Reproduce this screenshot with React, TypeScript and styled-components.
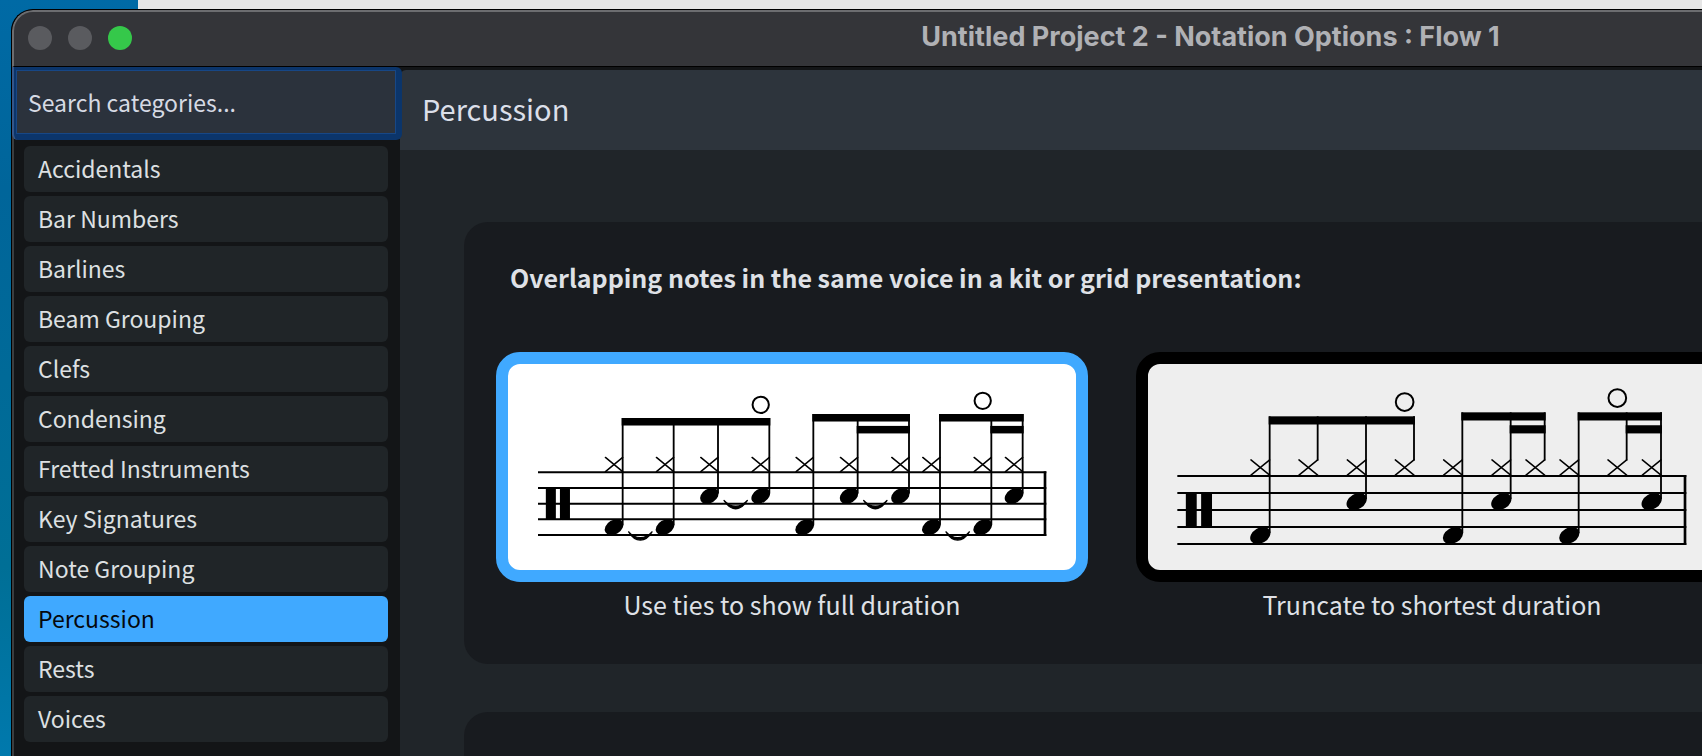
import React from "react";
import styled, { createGlobalStyle } from "styled-components";

const uiFont = `"Noto Sans CJK SC", "Open Sans", sans-serif`;

const GlobalStyle = createGlobalStyle`
  *, *::before, *::after { box-sizing: border-box; }
  html, body, #root { height: 100%; }
  body {
    margin: 0;
    overflow: hidden;
    font-family: ${uiFont};
    color: #dde0e6;
  }
`;

const Desktop = styled.div`
  display: flex;
  flex-direction: column;
  height: 100%;
  overflow: hidden;
  background: linear-gradient(#006aa5, #00659a 25%, #006f96 75%, #0079ad);
`;

const BackgroundWindow = styled.div`
  flex: none;
  height: 9px;
  margin-left: 138px;
  background: #e6e6e6;
`;

const Window = styled.main`
  flex: 1;
  min-height: 0;
  display: flex;
  flex-direction: column;
  margin: 0 -705px 0 11px;
  border: solid #000;
  border-width: 1px 0 0 1px;
  border-radius: 22px 0 0 0;
  overflow: hidden;
  background: #131517;
`;

const TitleBar = styled.header`
  flex: none;
  display: grid;
  grid-template-columns: 1fr auto 1fr;
  align-items: center;
  height: 57px;
  padding: 0 14px 2px;
  border: solid #6c6d70;
  border-width: 2px 0 0 2px;
  border-bottom: 1px solid #000;
  border-radius: 21px 0 0 0;
  background: #343539;
`;

const TrafficLights = styled.div`
  display: flex;
  gap: 16px;
`;

const Light = styled.button<{ $color: string }>`
  width: 24px;
  height: 24px;
  padding: 0;
  border: 0;
  border-radius: 50%;
  background: ${(p) => p.$color};
`;

const WindowTitle = styled.h1`
  margin: 0;
  padding-bottom: 2px;
  font: 700 27px/32px Inter, sans-serif;
  color: #b0b1b5;
`;

const Body = styled.div`
  flex: 1;
  min-height: 0;
  display: flex;
`;

const Sidebar = styled.aside`
  flex: none;
  width: 388px;
  border-left: 2px solid #3b3e40;
`;

const SearchRing = styled.div`
  position: relative;
  height: 73px;
  margin: 0 -2px;
  padding: 3px 6px 6px 2px;
  border-left: 2px solid #365688;
  border-radius: 0 6px 6px 6px;
  background: #0b356b;
`;

const SearchInput = styled.input`
  display: block;
  width: 100%;
  height: 64px;
  padding: 0 11px;
  border: 1px solid #174786;
  border-radius: 0;
  outline: 0;
  background: #2b323c;
  color: #d6dae4;
  font: 400 23px/36px ${uiFont};
  &::placeholder { color: #d6dae4; opacity: 1; }
`;

const CategoryList = styled.ul`
  display: flex;
  flex-direction: column;
  gap: 4px;
  margin: 0;
  padding: 6px 12px 0 10px;
  list-style: none;
`;

const Category = styled.button<{ $selected: boolean }>`
  display: block;
  width: 100%;
  height: 46px;
  padding: 0 14px 2px;
  border: 0;
  border-radius: 6px;
  text-align: left;
  font: 400 23px/44px ${uiFont};
  background: ${(p) => (p.$selected ? "#40a9ff" : "#202528")};
  color: ${(p) => (p.$selected ? "#05080c" : "#dde0e2")};
`;

const Content = styled.section`
  flex: 1;
  min-width: 0;
  padding-top: 3px;
`;

const ContentHeader = styled.div`
  height: 80px;
  padding: 0 22px;
  border-radius: 6px 0 0 0;
  background: #2d343c;
`;

const ContentTitle = styled.h2`
  margin: 0;
  font: 400 29px/76px ${uiFont};
  color: #dbdfe9;
`;

const Page = styled.div`
  display: flex;
  flex-direction: column;
  gap: 48px;
  padding: 72px 64px;
  background: #202529;
`;

const Card = styled.section`
  min-height: 442px;
  padding: 36px 32px 42px;
  border-radius: 24px;
  background: #181b1f;
`;

const CardTitle = styled.h3`
  margin: 0 0 56px;
  padding-left: 14px;
  font: 700 25px/38px ${uiFont};
  color: #dfe1e6;
`;

const Options = styled.div`
  display: flex;
  gap: 48px;
`;

const Option = styled.button`
  display: flex;
  flex-direction: column;
  align-items: center;
  gap: 4px;
  width: 592px;
  padding: 0;
  border: 0;
  background: none;
  color: #dfe1e6;
  font: 400 25px/36px ${uiFont};
`;

const Preview = styled.span<{ $selected: boolean }>`
  display: block;
  width: 100%;
  border: 12px solid ${(p) => (p.$selected ? "#40a9ff" : "#000")};
  border-radius: 24px;
  background: ${(p) => (p.$selected ? "#fff" : "#eee")};
`;

const Score = styled.svg`
  display: block;
  width: 100%;
  height: auto;
`;

type Head = "low" | "mid" | "none";
interface Note {
  x: number;
  head: Head;
  tied?: boolean;
  open?: boolean;
}
interface Group {
  beam: number;
  notes: Note[];
  subBeam?: [number, number];
}
interface Music {
  space: number;
  top: number;
  left: number;
  groups: Group[];
}

const tiedMusic: Music = {
  space: 47,
  top: 325,
  left: 90,
  groups: [
    {
      beam: 162,
      notes: [
        { x: 344, head: "low", tied: true },
        { x: 497, head: "low" },
        { x: 630, head: "mid", tied: true },
        { x: 784, head: "mid", open: true },
      ],
    },
    {
      beam: 150,
      subBeam: [1049, 1203],
      notes: [
        { x: 916, head: "low" },
        { x: 1049, head: "mid", tied: true },
        { x: 1203, head: "mid" },
      ],
    },
    {
      beam: 150,
      subBeam: [1450, 1544],
      notes: [
        { x: 1296, head: "low", tied: true },
        { x: 1450, head: "low", open: true },
        { x: 1544, head: "mid" },
      ],
    },
  ],
};

const truncatedMusic: Music = {
  space: 51,
  top: 336,
  left: 88,
  groups: [
    {
      beam: 157,
      notes: [
        { x: 365, head: "low" },
        { x: 509, head: "none" },
        { x: 654, head: "mid" },
        { x: 798, head: "none", open: true },
      ],
    },
    {
      beam: 145,
      subBeam: [1088, 1190],
      notes: [
        { x: 943, head: "low" },
        { x: 1088, head: "mid" },
        { x: 1190, head: "none" },
      ],
    },
    {
      beam: 145,
      subBeam: [1436, 1539],
      notes: [
        { x: 1292, head: "low" },
        { x: 1436, head: "none", open: true },
        { x: 1539, head: "mid" },
      ],
    },
  ],
};

const END = 1615;

function MusicScore({ music }: { music: Music }) {
  const { space: s, top, left } = music;
  const halfX = s * 0.55;
  const halfY = s * 0.45;
  const crossY = top - s * 0.5;
  const beamHeight = s * 0.48;
  const headY = { low: top + s * 3.5, mid: top + s * 1.5, none: crossY };
  return (
    <Score viewBox="0 0 1704 618" aria-hidden="true">
      <g fill="none" stroke="#000" strokeWidth={6}>
        {[0, 1, 2, 3, 4].map((n) => (
          <path key={n} d={`M${left} ${top + s * n}H${END}`} />
        ))}
        <path strokeWidth={8} d={`M${END - 4} ${top - 3}V${top + 4 * s + 3}`} />
      </g>
      <rect x={left + s * 0.5} y={top + s} width={s * 0.64} height={s * 2} />
      <rect x={left + s * 1.4} y={top + s} width={s * 0.64} height={s * 2} />
      {music.groups.map((g) => {
        const first = g.notes[0].x;
        const last = g.notes[g.notes.length - 1].x;
        return (
          <g key={first}>
            <rect x={first - 3} y={g.beam} width={last - first + 6} height={beamHeight} />
            {g.subBeam && (
              <rect
                x={g.subBeam[0] - 3}
                y={g.beam + s * 0.76}
                width={g.subBeam[1] - g.subBeam[0] + 6}
                height={beamHeight}
              />
            )}
            {g.notes.map((n) => {
              const cx = n.x - halfX;
              const y = headY[n.head];
              const stemEnd = n.head === "none" ? crossY - halfY + 2 : y - s * 0.15;
              const tieStart = n.x + 18;
              const tieY = y + 14;
              return (
                <g key={n.x} fill="none" stroke="#000" strokeWidth={4.5}>
                  <path strokeWidth={5.5} d={`M${n.x} ${g.beam}V${stemEnd}`} />
                  <path
                    strokeLinecap="round"
                    d={`M${cx - halfX} ${crossY - halfY}L${cx + halfX} ${crossY + halfY}M${cx - halfX} ${crossY + halfY}L${cx + halfX} ${crossY - halfY}`}
                  />
                  {n.head !== "none" && (
                    <ellipse
                      cx={cx}
                      cy={y}
                      rx={s * 0.64}
                      ry={s * 0.45}
                      fill="#000"
                      stroke="none"
                      transform={`rotate(-31 ${cx} ${y})`}
                    />
                  )}
                  {n.tied && (
                    <path
                      fill="#000"
                      strokeWidth={4}
                      strokeLinejoin="round"
                      d={`M${tieStart} ${tieY}c20 23 50 23 70 0c-20 33 -50 33 -70 0z`}
                    />
                  )}
                  {n.open && <circle cx={cx} cy={g.beam - s * 0.84} r={s * 0.52} strokeWidth={6} />}
                </g>
              );
            })}
          </g>
        );
      })}
    </Score>
  );
}

const categories = [
  "Accidentals",
  "Bar Numbers",
  "Barlines",
  "Beam Grouping",
  "Clefs",
  "Condensing",
  "Fretted Instruments",
  "Key Signatures",
  "Note Grouping",
  "Percussion",
  "Rests",
  "Voices",
];

const options = [
  { label: "Use ties to show full duration", music: tiedMusic },
  { label: "Truncate to shortest duration", music: truncatedMusic },
];

export default function App() {
  const [category, setCategory] = React.useState("Percussion");
  const [choice, setChoice] = React.useState(0);
  return (
    <>
      <GlobalStyle />
      <Desktop>
        <BackgroundWindow />
        <Window>
          <TitleBar>
            <TrafficLights>
              <Light $color="#5a5b5f" aria-label="Close" />
              <Light $color="#5a5b5f" aria-label="Minimize" />
              <Light $color="#35c84a" aria-label="Zoom" />
            </TrafficLights>
            <WindowTitle>Untitled Project 2 - Notation Options : Flow 1</WindowTitle>
          </TitleBar>
          <Body>
            <Sidebar>
              <SearchRing>
                <SearchInput type="text" placeholder="Search categories..." aria-label="Search categories" />
              </SearchRing>
              <CategoryList>
                {categories.map((name) => (
                  <li key={name}>
                    <Category $selected={name === category} onClick={() => setCategory(name)}>
                      {name}
                    </Category>
                  </li>
                ))}
              </CategoryList>
            </Sidebar>
            <Content>
              <ContentHeader>
                <ContentTitle>{category}</ContentTitle>
              </ContentHeader>
              <Page>
                <Card>
                  <CardTitle>Overlapping notes in the same voice in a kit or grid presentation:</CardTitle>
                  <Options>
                    {options.map((o, i) => (
                      <Option key={o.label} aria-pressed={i === choice} onClick={() => setChoice(i)}>
                        <Preview $selected={i === choice}>
                          <MusicScore music={o.music} />
                        </Preview>
                        {o.label}
                      </Option>
                    ))}
                  </Options>
                </Card>
                <Card />
              </Page>
            </Content>
          </Body>
        </Window>
      </Desktop>
    </>
  );
}
